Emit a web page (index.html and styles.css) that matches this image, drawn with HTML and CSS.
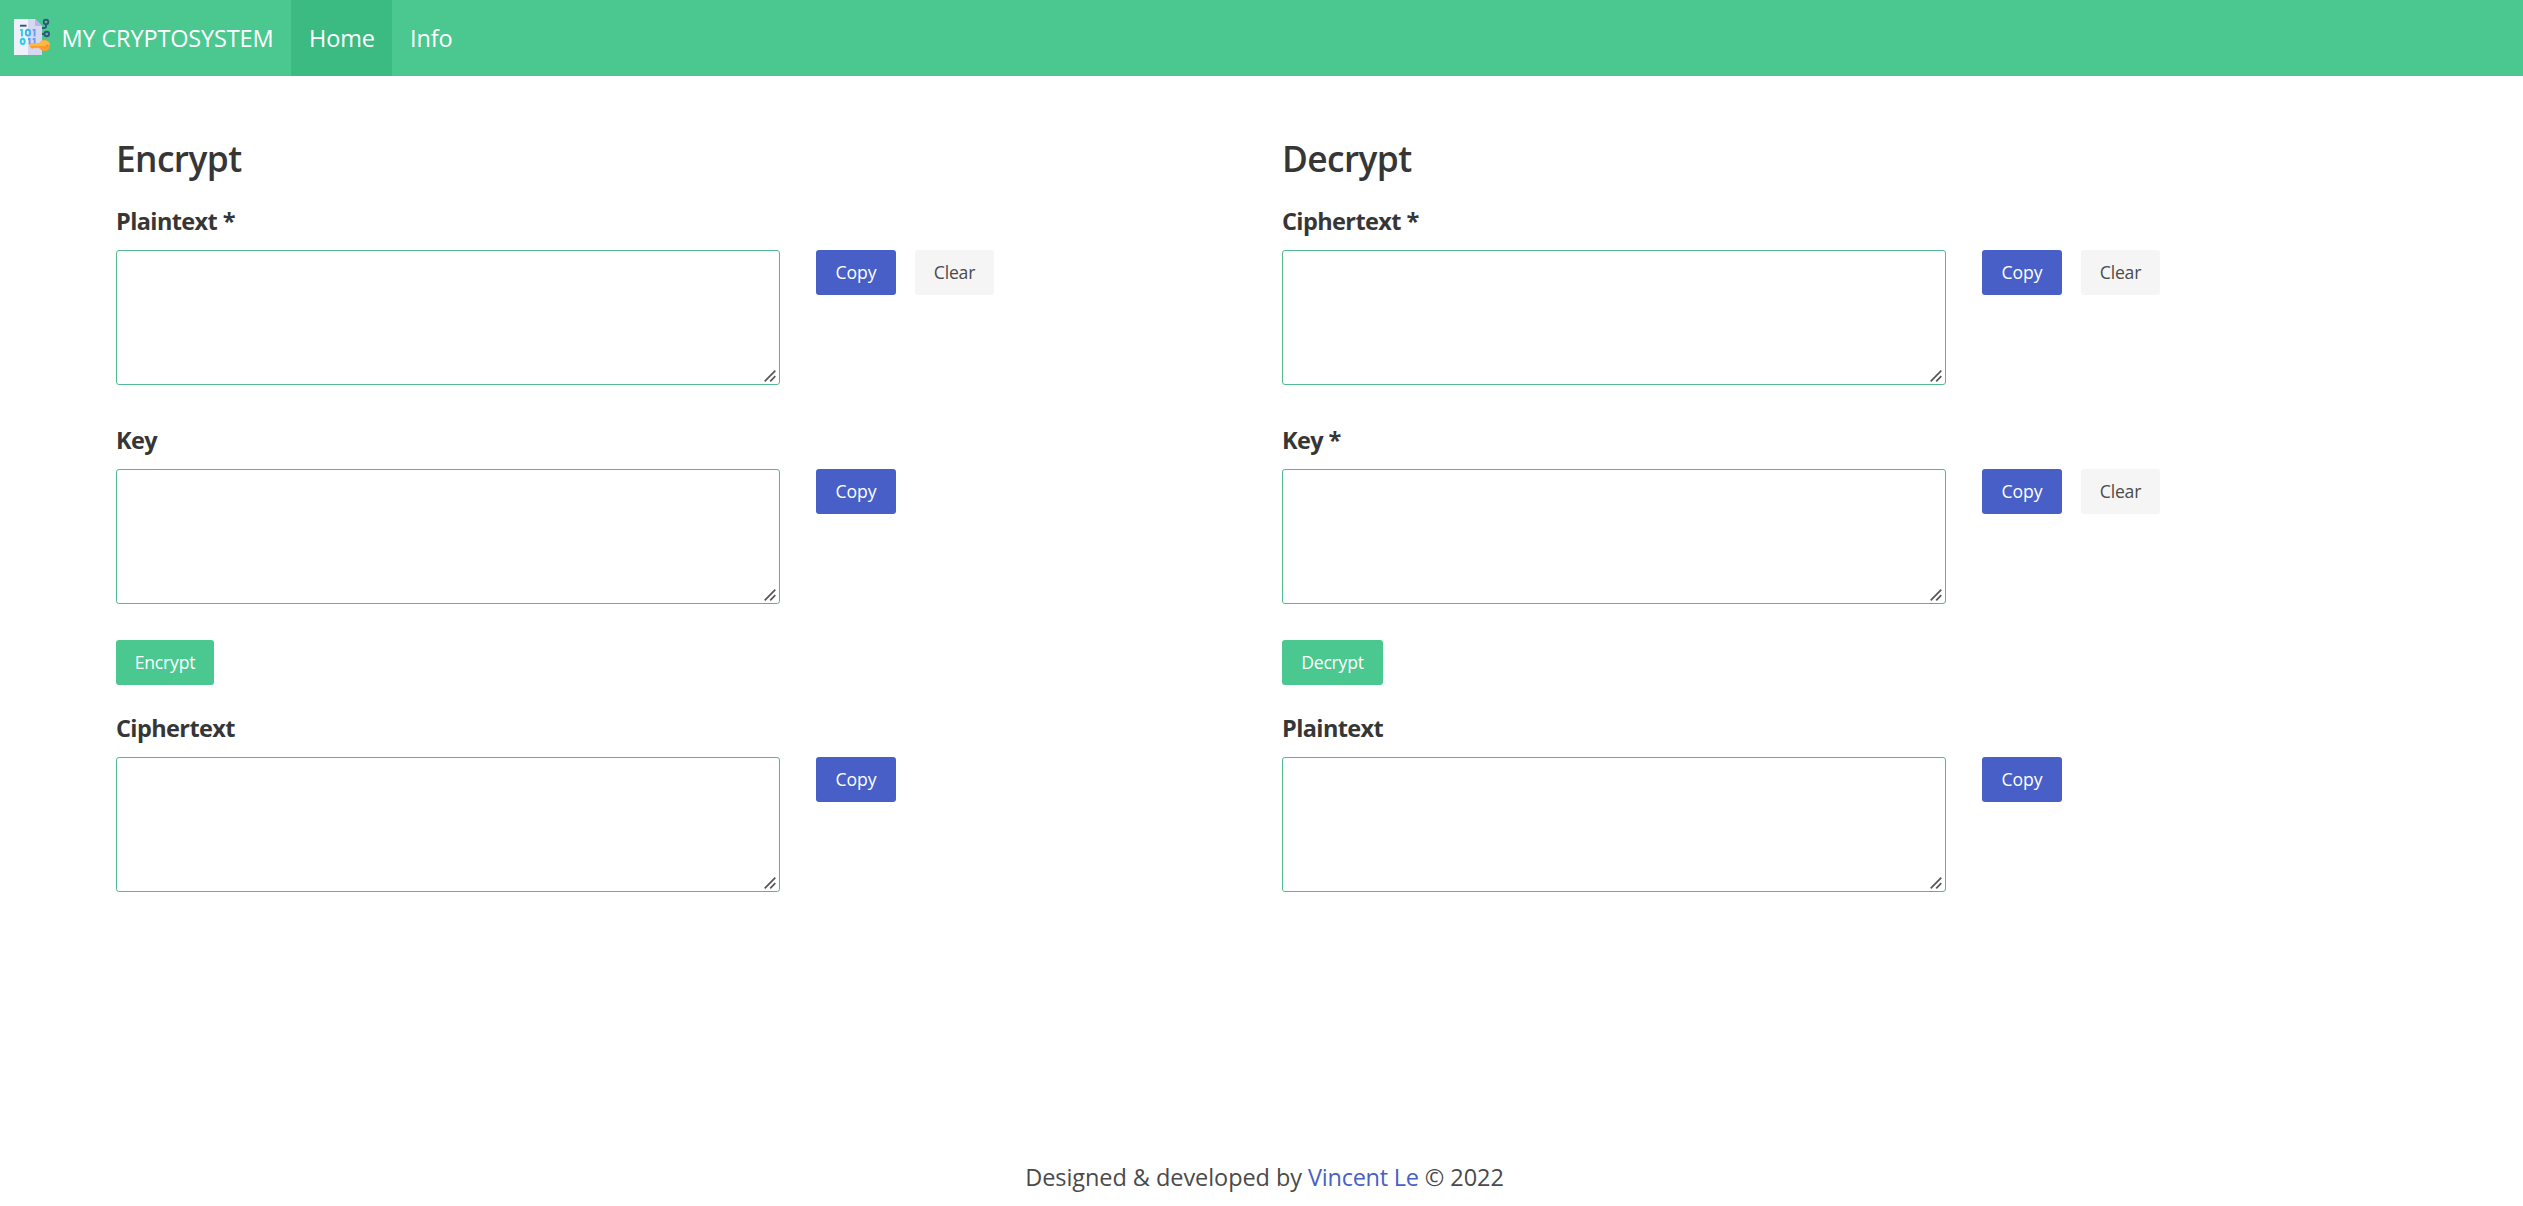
FILE: index.html
```html
<!DOCTYPE html>
<html lang="en">
<head>
<meta charset="utf-8">
<title>My Cryptosystem</title>
<link rel="stylesheet" href="styles.css">
</head>
<body>
<svg class="defs" aria-hidden="true">
  <symbol id="grip" viewBox="0 0 12 12"><path d="M.7 11.3 11.3.7M6.2 11.3l5.1-5.1" fill="none" stroke="#555" stroke-width="1.7"/></symbol>
</svg>
<nav class="navbar">
  <a class="brand">
    <svg class="logo" viewBox="0 0 36 36">
      <path fill="#eef1fa" d="M0 0h14v36H0z"/>
      <path fill="#d6d7f1" d="M14 0h7l7 7v29H14z"/>
      <path fill="#b9b6e6" d="M21 0l7 7h-7z"/>
      <g fill="none" stroke="#33567a" stroke-width="1.9">
        <path d="M6 6.700h6.500"/>
        <circle cx="32" cy="3" r="2.300"/>
        <circle cx="32.700" cy="15" r="2.300"/>
        <path d="M32 5.300v1.900q0 1.800-2 1.800h-2M30.500 15H28"/>
      </g>
      <g fill="none" stroke-width="1.900">
        <g stroke="#24cfee"><path d="M6.200 11h1.700v6.500"/><ellipse cx="8.700" cy="22.400" rx="2" ry="2.600"/></g>
        <ellipse cx="14" cy="13.700" rx="2.200" ry="2.900" stroke="#3db4ef"/>
        <path stroke="#6c9bf2" d="M18.700 11h1.900v6.500M14 20h1.700v5.500M18.700 20h1.900v5.500"/>
      </g>
      <circle cx="30.500" cy="26.500" r="5.500" fill="#fb9e2e"/>
      <path fill="#fb9e2e" d="M17 24.500h10v5h-1.500l-1.500-1-1.500 1-1.500-1-1.500 1h-2l-2-2.500z"/>
      <path fill="#fdb840" d="M17 24.500h8.400a5.500 5.500 0 0 1 10.400 1q-2 1.500-5 1.500H15.500z"/>
      <circle cx="33" cy="26.500" r="1" fill="#e98a22"/>
    </svg>
    <span>MY CRYPTOSYSTEM</span>
  </a>
  <a class="tab tab-active">Home</a>
  <a class="tab">Info</a>
</nav>

<main class="columns">
  <section class="panel">
    <h1 class="title">Encrypt</h1>
    <div class="field">
      <label class="label">Plaintext *</label>
      <div class="row">
        <div class="control"><textarea class="textarea"></textarea><svg class="grip"><use href="#grip"/></svg></div>
        <div class="buttons"><button class="button link">Copy</button><button class="button light">Clear</button></div>
      </div>
    </div>
    <div class="field">
      <label class="label">Key</label>
      <div class="row">
        <div class="control"><textarea class="textarea"></textarea><svg class="grip"><use href="#grip"/></svg></div>
        <div class="buttons"><button class="button link">Copy</button></div>
      </div>
    </div>
    <button class="button action encrypt">Encrypt</button>
    <div class="field">
      <label class="label">Ciphertext</label>
      <div class="row">
        <div class="control"><textarea class="textarea"></textarea><svg class="grip"><use href="#grip"/></svg></div>
        <div class="buttons"><button class="button link">Copy</button></div>
      </div>
    </div>
  </section>

  <section class="panel">
    <h1 class="title">Decrypt</h1>
    <div class="field">
      <label class="label">Ciphertext *</label>
      <div class="row">
        <div class="control"><textarea class="textarea"></textarea><svg class="grip"><use href="#grip"/></svg></div>
        <div class="buttons"><button class="button link">Copy</button><button class="button light">Clear</button></div>
      </div>
    </div>
    <div class="field">
      <label class="label">Key *</label>
      <div class="row">
        <div class="control"><textarea class="textarea"></textarea><svg class="grip"><use href="#grip"/></svg></div>
        <div class="buttons"><button class="button link">Copy</button><button class="button light">Clear</button></div>
      </div>
    </div>
    <button class="button action decrypt">Decrypt</button>
    <div class="field">
      <label class="label">Plaintext</label>
      <div class="row">
        <div class="control"><textarea class="textarea"></textarea><svg class="grip"><use href="#grip"/></svg></div>
        <div class="buttons"><button class="button link">Copy</button></div>
      </div>
    </div>
  </section>
</main>

<footer class="footer">Designed &amp; developed by <a class="author">Vincent Le</a> © 2022</footer>
</body>
</html>
```
FILE: styles.css
```css
* { box-sizing: border-box; margin: 0; }

body {
  display: flex;
  flex-direction: column;
  height: 1206px;
  background: #fff;
  color: #4a4a4a;
  font: 400 23.5px/36px "Open Sans", "Noto Sans", sans-serif;
}

.defs { display: none; }

.navbar {
  display: flex;
  height: 76px;
  background: #4ac88f;
  color: #fff;
  letter-spacing: -0.15px;
}

.brand {
  display: flex;
  align-items: center;
  gap: 11.500px;
  width: 291px;
  padding-left: 14px;
  white-space: nowrap;
}

.logo { width: 36px; height: 36px; margin-bottom: 2px; overflow: visible; }

.tab {
  display: flex;
  align-items: center;
  padding: 0 17px 0 18px;
}

.tab-active { width: 101px; background: #3bbb81; }

.columns {
  display: grid;
  grid-template-columns: 1166px 1fr;
  padding: 62px 0 0 116px;
}

.panel { display: flex; flex-direction: column; align-items: flex-start; }

.title {
  margin-bottom: 25px;
  color: #363636;
  font-size: 35.3px;
  font-weight: 600;
  line-height: 40px;
  letter-spacing: -0.6px;
}

.label {
  display: block;
  margin-bottom: 11px;
  color: #363636;
  font-weight: 700;
  letter-spacing: -0.6px;
}

.field { margin-bottom: 37px; }
.row { display: flex; gap: 36px; }
.control { position: relative; width: 664px; height: 135px; }

.textarea {
  display: block;
  width: 100%;
  height: 100%;
  border: 1px solid #52ba8e;
  border-radius: 3px;
  outline: 0;
  background: #fff;
  resize: none;
}

.grip {
  position: absolute;
  right: 4px;
  bottom: 3px;
  width: 12px;
  height: 12px;
}

.buttons { display: flex; gap: 19px; }

.button {
  height: 45px;
  padding: 0;
  border: 0;
  border-radius: 3px;
  color: #fff;
  font: 400 17.6px/45px "Open Sans", "Noto Sans", sans-serif;
  letter-spacing: -0.2px;
}

.link { width: 80px; background: #485fc7; letter-spacing: 0; }
.light { width: 79px; background: #f5f5f5; color: #4a4a4a; }
.action { margin: -1px 0 25px; background: #4ac88f; }
.encrypt { width: 98px; }
.decrypt { width: 101px; }

.footer {
  margin-top: auto;
  padding: 0 0 11px 6px;
  text-align: center;
  letter-spacing: -0.06px;
}

.author { color: #485fc7; letter-spacing: -0.25px; }
```
